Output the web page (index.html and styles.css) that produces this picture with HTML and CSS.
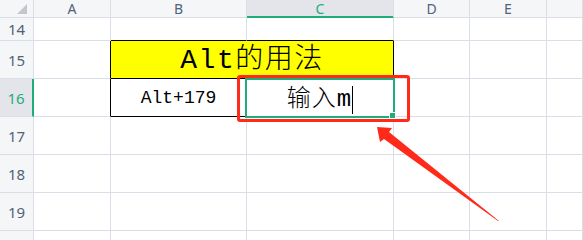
FILE: index.html
```html
<!DOCTYPE html>
<html lang="zh">
<head>
<meta charset="utf-8">
<title>Sheet</title>
<link rel="stylesheet" href="styles.css">
</head>
<body>
<div class="sheet">
  <div class="grid">
    <div class="corner"><span class="tri"></span></div>
    <div class="ch">A</div>
    <div class="ch">B</div>
    <div class="ch ch-sel">C</div>
    <div class="ch">D</div>
    <div class="ch">E</div>
    <div class="ch"></div>

    <div class="rh">14</div>
    <div class="c"></div>
    <div class="c bb"></div>
    <div class="c bb"></div>
    <div class="c"></div>
    <div class="c"></div>
    <div class="c"></div>

    <div class="rh">15</div>
    <div class="c br"></div>
    <div class="c title br bb">Alt的用法</div>
    <div class="c"></div>
    <div class="c"></div>
    <div class="c"></div>

    <div class="rh rh-sel">16</div>
    <div class="c br"></div>
    <div class="c br bb val">Alt+179</div>
    <div class="c br bb edit">输入m<span class="caret"></span></div>
    <div class="c"></div>
    <div class="c"></div>
    <div class="c"></div>

    <div class="rh">17</div>
    <div class="c"></div><div class="c"></div><div class="c"></div><div class="c"></div><div class="c"></div><div class="c"></div>

    <div class="rh">18</div>
    <div class="c"></div><div class="c"></div><div class="c"></div><div class="c"></div><div class="c"></div><div class="c"></div>

    <div class="rh">19</div>
    <div class="c"></div><div class="c"></div><div class="c"></div><div class="c"></div><div class="c"></div><div class="c"></div>

    <div class="rh"></div>
    <div class="c"></div><div class="c"></div><div class="c"></div><div class="c"></div><div class="c"></div><div class="c"></div>
  </div>

  <div class="selection"><span class="handle"></span></div>
  <div class="mark"></div>
  <svg class="arrow" width="583" height="240" viewBox="0 0 583 240">
    <polygon points="377,127 392,128 389,132 499,221 498,221 384,139 380,142" fill="#ff2a1a"/>
  </svg>
</div>
</body>
</html>
```

FILE: styles.css
```css
* { box-sizing: border-box; }
html, body { margin: 0; padding: 0; background: #fff; }
body { width: 583px; height: 240px; overflow: hidden; }

.sheet { position: relative; width: 583px; height: 240px; }

.grid {
  display: grid;
  grid-template-columns: 34px 77px 136px 147px 76px 77px 36px;
  grid-template-rows: 18px 23px 38px 38px 38px 38px 38px 20px;
  font-family: "Noto Sans", "Open Sans", sans-serif;
}

.corner, .ch, .rh {
  background: #f5f6f8;
  border-right: 1px solid #d9dee7;
  border-bottom: 1px solid #d9dee7;
  color: #52627a;
}

.corner { position: relative; }
.tri {
  position: absolute;
  right: 6px;
  bottom: 3px;
  width: 0;
  height: 0;
  border-left: 10px solid transparent;
  border-bottom: 10px solid #c3c7cd;
}

.ch {
  display: flex;
  align-items: center;
  justify-content: center;
  font-size: 14px;
  line-height: 16px;
  overflow: visible;
}
.ch-sel {
  background: #e3e5ea;
  color: #1fae78;
  border-bottom-color: #1fae78;
  box-shadow: inset 0 -1px 0 #1fae78;
}

.rh {
  display: flex;
  align-items: center;
  justify-content: center;
  font-size: 15px;
  line-height: 1;
  padding-top: 1px;
}
.rh-sel {
  background: #e3e5ea;
  color: #1fae78;
  border-right: 2px solid #1fae78;
}

.c {
  border-right: 1px solid #d9dee7;
  border-bottom: 1px solid #d9dee7;
  display: flex;
  align-items: center;
  justify-content: center;
  color: #000;
  font-family: "Liberation Mono", "Noto Sans CJK SC", monospace;
  font-weight: 300;
}
.c.br { border-right-color: #000; }
.c.bb { border-bottom-color: #000; }

.title {
  grid-column: span 2;
  background: #ffff00;
  font-size: 28px;
  letter-spacing: 1.5px;
  line-height: 1;
  padding-top: 2px;
}

.val {
  font-size: 18px;
  line-height: 1;
}

.edit {
  font-size: 24px;
  line-height: 1;
  padding-top: 5px;
  letter-spacing: 1px;
}
.caret {
  display: inline-block;
  width: 1px;
  height: 28px;
  margin-left: 0;
  background: #000;
}

.selection {
  position: absolute;
  left: 245px;
  top: 78px;
  width: 150px;
  height: 40px;
  border: 2px solid #1fae78;
}
.handle {
  position: absolute;
  right: -3px;
  bottom: -3px;
  width: 7px;
  height: 7px;
  background: #1fae78;
  border: 1px solid #fff;
}

.mark {
  position: absolute;
  left: 237px;
  top: 75px;
  width: 173px;
  height: 47px;
  border: 3px solid #ff2a1a;
  border-radius: 3px;
}

.arrow {
  position: absolute;
  left: 0;
  top: 0;
}
```
